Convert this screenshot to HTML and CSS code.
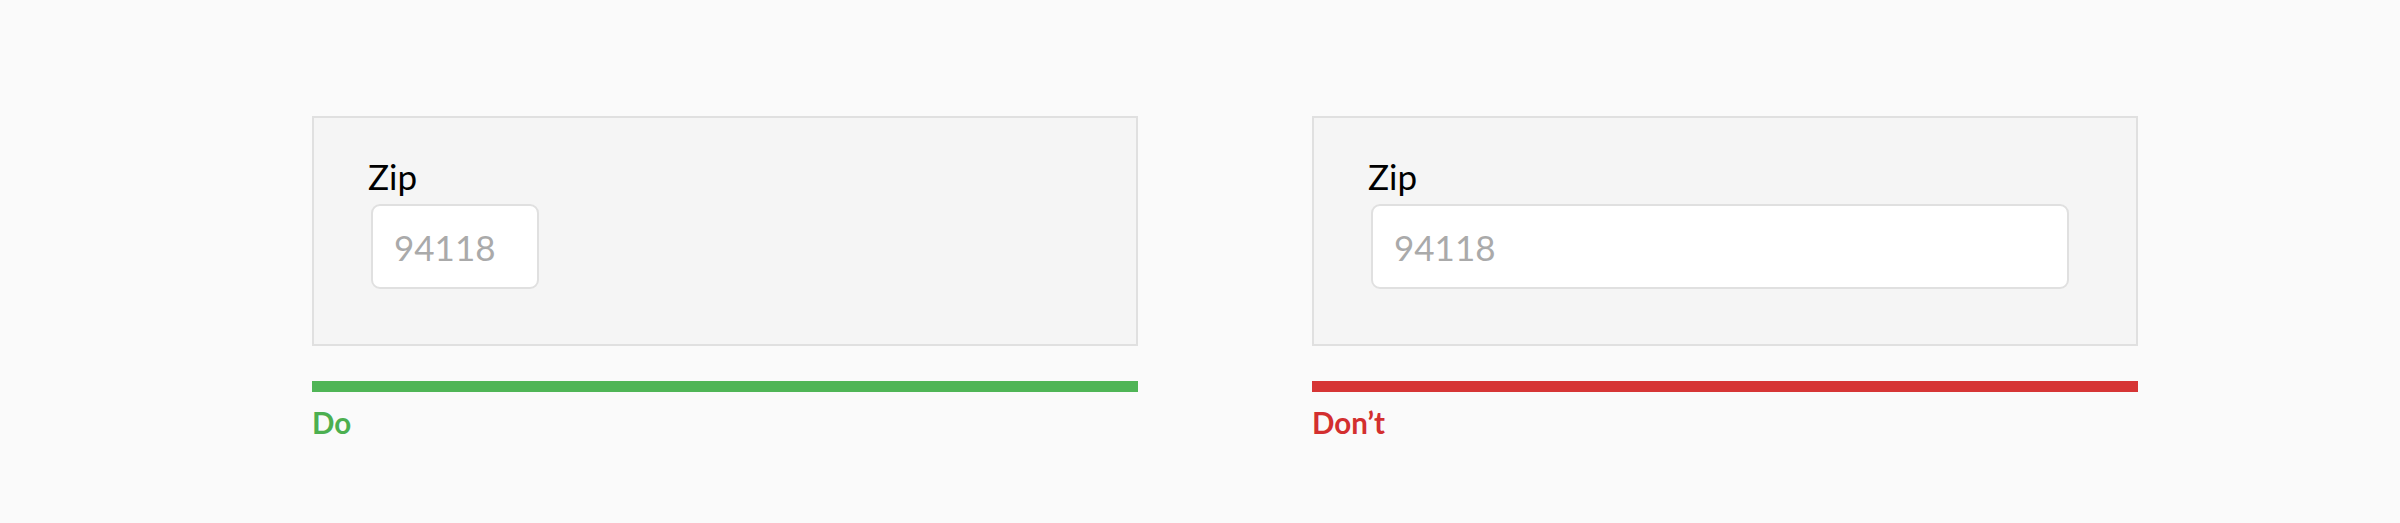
FILE: index.html
```html
<!DOCTYPE html>
<html lang="en">
<head>
    <meta charset="UTF-8">
    <meta name="viewport" content="width=device-width, initial-scale=1.0">
    <title>Zip field width</title>
    <link rel="stylesheet" href="styles.css">
</head>
<body>
    <div class="page">
        <div class="example">
            <div class="card">
                <label class="field-label" for="zip-do">Zip</label>
                <input id="zip-do" class="zip-input short" type="text" placeholder="94118" autocomplete="off">
            </div>
            <div class="bar do"></div>
            <p class="verdict do">Do</p>
        </div>
        <div class="example">
            <div class="card">
                <label class="field-label" for="zip-dont">Zip</label>
                <input id="zip-dont" class="zip-input long" type="text" placeholder="94118" autocomplete="off">
            </div>
            <div class="bar dont"></div>
            <p class="verdict dont">Don’t</p>
        </div>
    </div>
</body>
</html>
```

FILE: styles.css
```css
body {
    margin: 0;
    background: #fafafa;
    font-family: Lato, "Open Sans", sans-serif;
    color: #000;
}
.page {
    display: flex;
    gap: 174px;
    padding: 116px 0 0 312px;
}
.example {
    width: 826px;
}
.card {
    box-sizing: border-box;
    height: 230px;
    display: flex;
    flex-direction: column;
    align-items: flex-start;
    background: #f5f5f5;
    border: 2px solid #e0e0e0;
    padding: 37px 55px 0 54px;
}
.field-label {
    font-size: 35px;
    line-height: 42px;
}
.zip-input {
    box-sizing: border-box;
    height: 85px;
    margin: 7px 0 0 3px;
    padding: 0 0 0 21px;
    background: #fff;
    border: 2px solid #e0e0e0;
    border-radius: 9px;
    font-family: Lato, "Open Sans", sans-serif;
    font-size: 35px;
    color: #333;
    outline: none;
}
.zip-input::placeholder {
    color: #aaa;
}
.zip-input.short {
    width: 168px;
}
.zip-input.long {
    width: 698px;
}
.bar {
    height: 11px;
    margin-top: 35px;
}
.bar.do {
    background: #4fb556;
}
.bar.dont {
    background: #d63535;
}
.verdict {
    margin: 13px 0 0;
    font-size: 29.5px;
    font-weight: 700;
}
.verdict.do {
    color: #4caf50;
}
.verdict.dont {
    color: #d32f2f;
}
```
